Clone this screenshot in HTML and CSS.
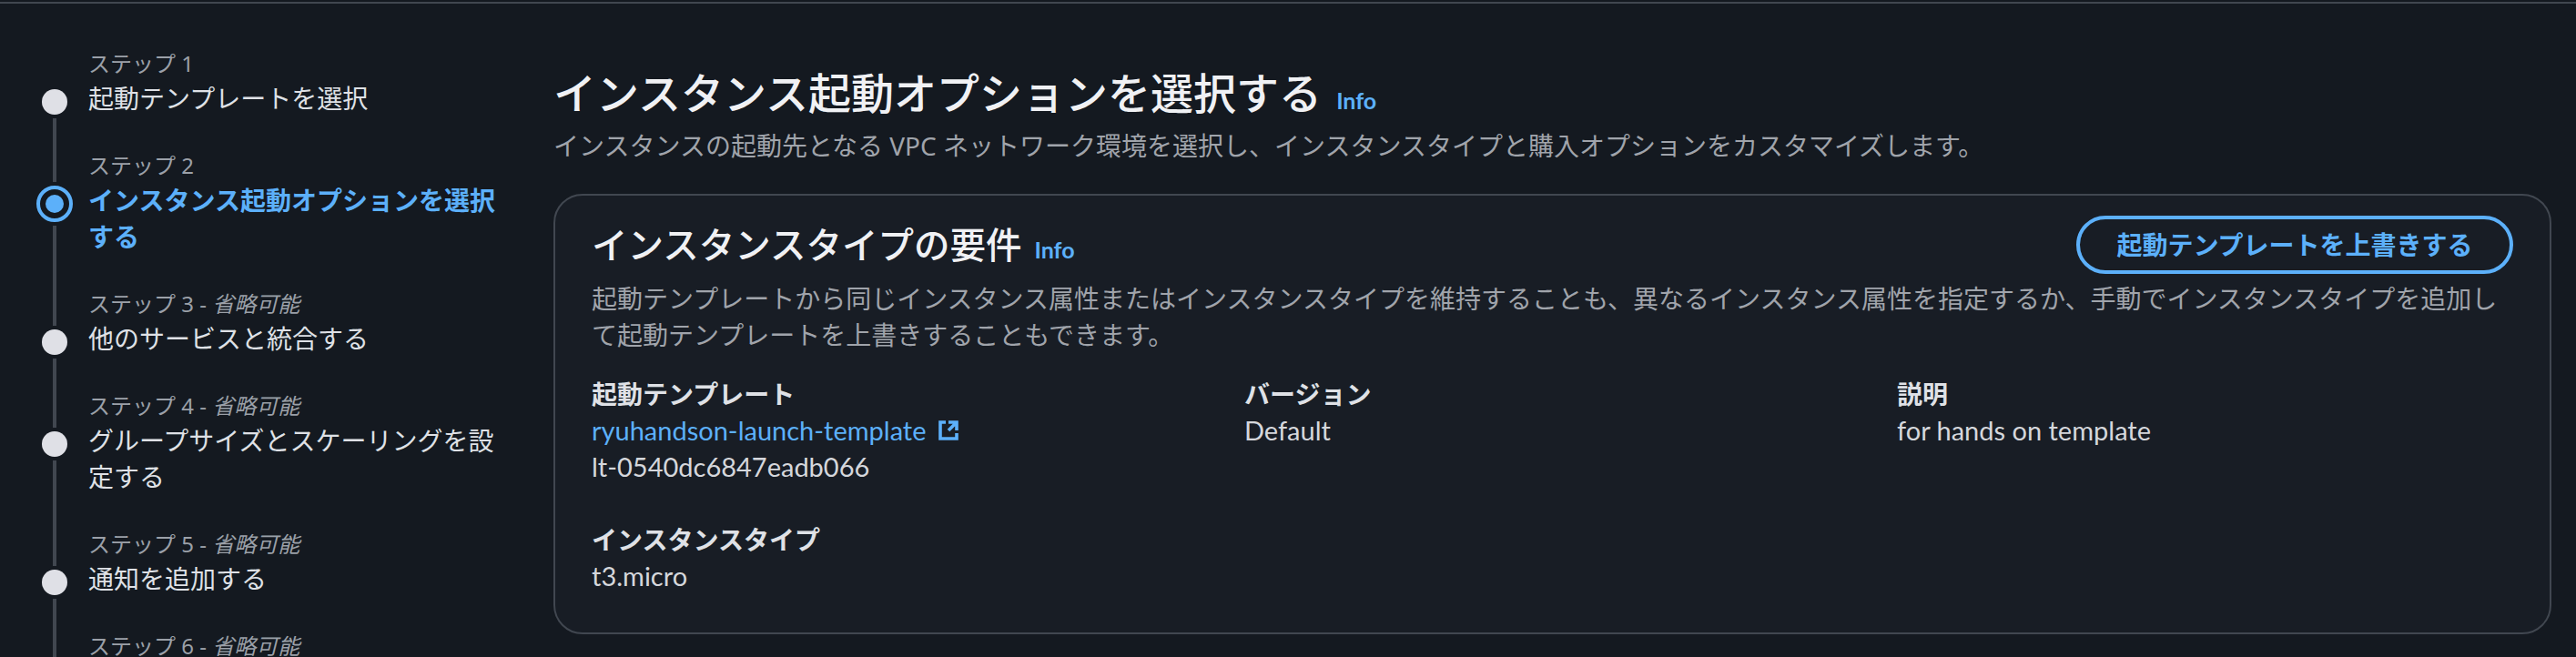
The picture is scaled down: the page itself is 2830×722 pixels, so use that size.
FILE: index.html
```html
<!DOCTYPE html>
<html lang="ja">
<head>
<meta charset="utf-8">
<title>インスタンス起動オプションを選択する</title>
<link rel="stylesheet" href="styles.css">
</head>
<body>
<div class="topline"></div>
<div class="layout">
  <nav class="steps">
    <div class="step">
      <div class="marker"><span class="seg-top seg-none"></span><span class="dot"></span><span class="seg"></span></div>
      <div class="step-text"><div class="step-label">ステップ 1</div><div class="step-name">起動テンプレートを選択</div></div>
    </div>
    <div class="step">
      <div class="marker marker-active"><span class="seg-top"></span><span class="dot-active"><span class="dot-inner"></span></span><span class="seg"></span></div>
      <div class="step-text"><div class="step-label">ステップ 2</div><div class="step-name step-current">インスタンス起動オプションを選択する</div></div>
    </div>
    <div class="step">
      <div class="marker"><span class="seg-top"></span><span class="dot"></span><span class="seg"></span></div>
      <div class="step-text"><div class="step-label">ステップ 3 - <i>省略可能</i></div><div class="step-name">他のサービスと統合する</div></div>
    </div>
    <div class="step">
      <div class="marker"><span class="seg-top"></span><span class="dot"></span><span class="seg"></span></div>
      <div class="step-text"><div class="step-label">ステップ 4 - <i>省略可能</i></div><div class="step-name">グループサイズとスケーリングを設定する</div></div>
    </div>
    <div class="step">
      <div class="marker"><span class="seg-top"></span><span class="dot"></span><span class="seg"></span></div>
      <div class="step-text"><div class="step-label">ステップ 5 - <i>省略可能</i></div><div class="step-name">通知を追加する</div></div>
    </div>
    <div class="step step-last">
      <div class="marker"><span class="seg-top"></span></div>
      <div class="step-text"><div class="step-label">ステップ 6 - <i>省略可能</i></div></div>
    </div>
  </nav>
  <main class="content">
    <header class="page-head">
      <h1 class="page-title">インスタンス起動オプションを選択する<a class="info info-h1">Info</a></h1>
      <p class="page-sub">インスタンスの起動先となる VPC ネットワーク環境を選択し、インスタンスタイプと購入オプションをカスタマイズします。</p>
    </header>
    <section class="card">
      <div class="card-head">
        <h2 class="card-title">インスタンスタイプの要件<a class="info info-h2">Info</a></h2>
        <button class="btn">起動テンプレートを上書きする</button>
      </div>
      <p class="card-desc">起動テンプレートから同じインスタンス属性またはインスタンスタイプを維持することも、異なるインスタンス属性を指定するか、手動でインスタンスタイプを追加して起動テンプレートを上書きすることもできます。</p>
      <div class="kv-grid">
        <div class="kv">
          <div class="kv-key">起動テンプレート</div>
          <div class="kv-val"><a class="link">ryuhandson-launch-template<svg class="ext" viewBox="0 0 16 16" aria-hidden="true"><path d="M14 8V2H8M14 2 8 8M6 2H2v12h12v-4"/></svg></a></div>
          <div class="kv-val">lt-0540dc6847eadb066</div>
        </div>
        <div class="kv">
          <div class="kv-key">バージョン</div>
          <div class="kv-val">Default</div>
        </div>
        <div class="kv">
          <div class="kv-key">説明</div>
          <div class="kv-val">for hands on template</div>
        </div>
        <div class="kv">
          <div class="kv-key">インスタンスタイプ</div>
          <div class="kv-val">t3.micro</div>
        </div>
      </div>
    </section>
  </main>
</div>
</body>
</html>
```

FILE: styles.css
```css
* { box-sizing: border-box; }
html, body { margin: 0; height: 722px; overflow: hidden; }
body {
  background: #141920;
  color: #dfe1e6;
  font-family: "Noto Sans", "Noto Sans CJK JP", sans-serif;
  font-size: 28px;
  line-height: 40px;
}
.topline { height: 4px; border-bottom: 2px solid #414750; }
.layout { display: flex; height: 718px; overflow: hidden; }

.steps { width: 608px; flex: none; padding: 48px 0 0 40px; }
.step { display: flex; }
.step-last { height: 30px; }
.marker { width: 40px; flex: none; display: flex; flex-direction: column; align-items: center; margin-right: 17px; }
.seg-top { width: 4px; height: 42px; background: #414750; margin-bottom: 4px; flex: none; }
.seg-none { background: transparent; }
.marker-active .seg-top { height: 36px; }
.seg { width: 4px; flex: 1; background: #414750; margin-top: 4px; }
.dot { width: 28px; height: 28px; border-radius: 50%; background: #dfe0e6; flex: none; }
.dot-active { width: 40px; height: 40px; border-radius: 50%; border: 4px solid #5cb0fa; flex: none; display: flex; align-items: center; justify-content: center; }
.dot-inner { width: 20px; height: 20px; border-radius: 50%; background: #5cb0fa; }
.step-text { width: 460px; padding-bottom: 36px; }
.step-last .step-text { padding-bottom: 0; }
.step-label { font-size: 24px; line-height: 36px; color: #9ba0a8; }
.step-last .step-label { line-height: 24px; padding-top: 6px; }
.step-label i { font-style: italic; }
.step-name { line-height: 40px; color: #dfe1e6; }
.step-current { color: #5cb0fa; font-weight: 700; }

.content { flex: 1; min-width: 0; padding: 70px 27px 0 0; }
.page-head { padding-bottom: 33px; }
.page-title { margin: 0; font-size: 47px; line-height: 56px; font-weight: 500; color: #f0f1f4; }
.page-sub { margin: 10px 0 0; color: #a0a4ab; }
.info { color: #5cb0fa; font-family: Lato, sans-serif; font-size: 25px; font-weight: 700; line-height: 32px; }
.info-h1 { margin-left: 16px; }
.info-h2 { margin-left: 14px; }

.card { height: 484px; border: 2px solid #414750; border-radius: 32px; background: #181d25; padding: 22px 40px 0; }
.card-head { display: flex; justify-content: space-between; align-items: flex-start; }
.card-title { margin: 0; padding-top: 6px; font-size: 39.5px; line-height: 52px; font-weight: 500; color: #f0f1f4; }
.btn { height: 64px; width: 480px; border: 4px solid #5cb0fa; border-radius: 32px; background: transparent; color: #5cb0fa; font: 700 28px/40px "Noto Sans", "Noto Sans CJK JP", sans-serif; }
.card-desc { margin: 7px 0 0; color: #a0a4ab; }
.kv-grid { display: grid; grid-template-columns: 717px 717px 1fr; row-gap: 40px; margin-top: 25px; }
.kv-key { font-weight: 700; color: #dfe1e6; }
.kv-val { color: #d5d7dc; font-family: Lato, "Noto Sans CJK JP", sans-serif; font-size: 29px; }
.link { color: #5cb0fa; display: inline-flex; align-items: center; }
.ext { width: 24px; height: 24px; margin-left: 12px; fill: none; stroke: #5cb0fa; stroke-width: 2.4; }
```
